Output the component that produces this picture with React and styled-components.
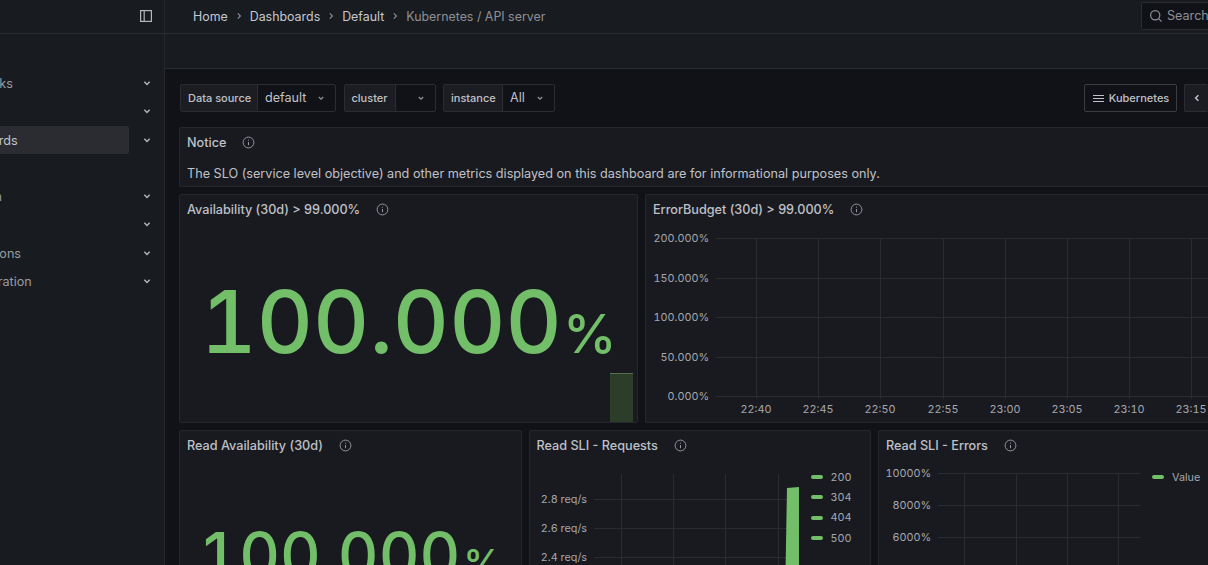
import React from 'react'
import styled, { createGlobalStyle } from 'styled-components'

const GlobalStyle = createGlobalStyle`
  html, body {
    margin: 0;
    height: 100%;
    overflow: hidden;
    background: #111217;
  }
  body {
    font-family: Inter, "Noto Sans", "Liberation Sans", sans-serif;
    color: #ccccdc;
  }
`

const Page = styled.div`
  display: flex;
  width: 1208px;
  height: 565px;
  overflow: hidden;
`

const Sidebar = styled.aside`
  flex: 0 0 164px;
  background: #181b1f;
  border-right: 1px solid #26282d;
  overflow: hidden;
`

const SidebarHead = styled.div`
  display: flex;
  align-items: center;
  justify-content: flex-end;
  height: 34px;
  padding: 0 11px 1px 0;
  border-bottom: 1px solid #2a2c31;
  box-sizing: border-box;
  color: #b4b5bb;
`

const Nav = styled.nav`
  padding-top: 35px;
`

const NavRow = styled.div`
  display: flex;
  align-items: center;
  height: 28.25px;
  color: #9a9ba2;
`

const NavLabel = styled.div`
  flex: 0 0 129px;
  height: 28px;
  line-height: 29px;
  font-size: 12.6px;
  white-space: nowrap;
  overflow: hidden;
  border-radius: 0 2px 2px 0;
  background: ${p => (p.$active ? '#2a2c31' : 'transparent')};
  color: ${p => (p.$active ? '#c4c5cc' : '#9a9ba2')};
`

const NavText = styled.span`
  display: inline-block;
  margin-left: -54px;
`

const NavCaret = styled.div`
  flex: 0 0 35px;
  display: flex;
  justify-content: center;
  color: #b4b5bb;
`

const Content = styled.main`
  flex: 1;
  min-width: 0;
  overflow: hidden;
`

const TopBar = styled.header`
  display: flex;
  align-items: center;
  justify-content: space-between;
  height: 34px;
  padding: 0 0 1px 28px;
  box-sizing: border-box;
  background: #181b1f;
  border-bottom: 1px solid #2a2c31;
`

const Crumbs = styled.div`
  display: flex;
  align-items: center;
  gap: 6px;
  font-size: 12.4px;
`

const Crumb = styled.span`
  color: ${p => (p.$current ? '#8f9097' : '#c6c7d2')};
`

const CrumbSep = styled.span`
  display: flex;
  color: #8f9097;
`

const SearchBox = styled.div`
  flex: 0 0 auto;
  display: flex;
  align-items: center;
  gap: 4px;
  width: 67px;
  height: 28px;
  margin-top: -1px;
  padding-left: 7px;
  box-sizing: border-box;
  overflow: hidden;
  background: #111217;
  border: 1px solid #2a2c31;
  border-right: 0;
  border-radius: 2px 0 0 2px;
  color: #8f9097;
  font-size: 12.6px;
`

const SubBar = styled.div`
  height: 35px;
  box-sizing: border-box;
  background: #181b1f;
  border-bottom: 1px solid #2a2c31;
`

const Dashboard = styled.div`
  padding: 15px 0 0 14px;
`

const FilterRow = styled.div`
  display: flex;
  align-items: center;
  justify-content: space-between;
  width: 1028px;
  height: 28px;
  margin: 0 0 15px 1px;
`

const FilterGroup = styled.div`
  display: flex;
  gap: 7.5px;
`

const Filter = styled.div`
  display: flex;
  height: 28px;
  box-sizing: border-box;
  border: 1px solid #2b2d32;
  border-radius: 2px;
  background: #111217;
`

const FilterName = styled.div`
  display: flex;
  align-items: center;
  width: ${p => p.$w}px;
  padding: 0 0 1px 7px;
  box-sizing: border-box;
  background: #1b1d22;
  border-right: 1px solid #2b2d32;
  font-size: 11px;
  font-weight: 500;
  color: #c0c1c8;
`

const FilterValue = styled.div`
  display: flex;
  align-items: center;
  justify-content: space-between;
  width: ${p => p.$w}px;
  padding: 0 9px 1px 7px;
  box-sizing: border-box;
  font-size: 12.6px;
  color: #c0c1c8;
  svg {
    color: #94959c;
  }
`

const RightButtons = styled.div`
  display: flex;
  gap: 7px;
`

const LinkButton = styled.div`
  display: flex;
  align-items: center;
  justify-content: ${p => (p.$icon ? 'flex-start' : 'center')};
  gap: 4px;
  width: ${p => p.$w}px;
  height: 28px;
  padding-left: ${p => (p.$icon ? '8px' : '0')};
  box-sizing: border-box;
  border: 1px solid ${p => (p.$icon ? '#2b2d32' : '#3a3c42')};
  border-right-width: ${p => (p.$icon ? '0' : '1px')};
  border-radius: 2px;
  background: ${p => (p.$icon ? '#1b1d22' : '#111217')};
  font-size: 11px;
  font-weight: 500;
  color: #c0c1c8;
`

const Grid = styled.div`
  display: grid;
  grid-template-columns: repeat(12, 109.5px);
  grid-auto-rows: min-content;
  gap: 7px;
`

const Panel = styled.section`
  grid-column: span ${p => p.$span};
  position: relative;
  height: ${p => p.$h}px;
  display: flex;
  flex-direction: column;
  box-sizing: border-box;
  background: #181a1f;
  border: 1px solid #25272c;
  border-radius: 2px;
  overflow: hidden;
`

const PanelHead = styled.div`
  flex: 0 0 29px;
  display: flex;
  align-items: center;
  gap: 16px;
  padding-left: 7px;
  font-size: 12.65px;
  font-weight: 500;
  color: #bfc0c8;
`

const InfoMark = styled.span`
  display: flex;
  color: #94959c;
`

const NoticeText = styled.div`
  padding: 8px 7px 0;
  font-size: 12.65px;
  line-height: 18px;
  color: #c0c1c8;
`

const StatBody = styled.div`
  flex: 1;
  display: flex;
  align-items: center;
  justify-content: center;
  padding-bottom: ${p => p.$pad}px;
  color: #73bf69;
  font-weight: 500;
  white-space: nowrap;
`

const StatLine = styled.div`
  display: flex;
  align-items: baseline;
  font-variant-numeric: tabular-nums;
`

const StatValue = styled.span`
  font-size: ${p => p.$size}px;
  line-height: 1;
`

const StatUnit = styled.span`
  font-size: ${p => p.$size}px;
  line-height: 1;
  margin-left: ${p => p.$gap}px;
`

const Spark = styled.div`
  position: absolute;
  right: 4px;
  bottom: 0;
  width: 23px;
  height: 49px;
  box-sizing: border-box;
  background: #2c3e2a;
  border-top: 1px solid #55704f;
`

const ChartRow = styled.div`
  flex: 1;
  display: flex;
  align-items: flex-start;
`

const ChartSvg = styled.svg`
  display: block;
  flex: 0 0 auto;
  text {
    font-family: Inter, "Noto Sans", "Liberation Sans", sans-serif;
    font-size: 10.8px;
    font-variant-numeric: tabular-nums;
    fill: #a6a7ae;
  }
`

const Legend = styled.ul`
  list-style: none;
  margin: 7px 0 0 7px;
  padding: 0;
`

const LegendItem = styled.li`
  display: flex;
  align-items: center;
  gap: 8px;
  height: 20.3px;
  font-size: 10.8px;
  font-variant-numeric: tabular-nums;
  color: #a6a7ae;
  &::before {
    content: '';
    width: 12px;
    height: 4px;
    border-radius: 2px;
    background: #73bf69;
  }
`

const Caret = ({ size = 10 }) => (
  <svg width={size} height={size} viewBox="0 0 10 10" fill="none" stroke="currentColor" strokeWidth="1.2">
    <path d="M2.8 4 5 6.2 7.2 4" />
  </svg>
)

const Info = () => (
  <InfoMark>
    <svg width="13" height="13" viewBox="0 0 13 13" fill="none" stroke="currentColor">
      <circle cx="6.5" cy="6.5" r="5.4" />
      <path d="M6.5 6v3.2M6.5 3.6v1" />
    </svg>
  </InfoMark>
)

const Sep = () => (
  <CrumbSep>
    <svg width="10" height="10" viewBox="0 0 10 10" fill="none" stroke="currentColor" strokeWidth="1.1">
      <path d="M3.8 2.4 6.4 5 3.8 7.6" />
    </svg>
  </CrumbSep>
)

const navItems = [
  { label: 'Bookmarks', caret: true },
  { label: 'Starred', caret: true },
  { label: 'Dashboards', caret: true, active: true },
  { label: 'Explore' },
  { label: 'Drilldown', caret: true },
  { label: 'Alerting', caret: true },
  { label: 'Connections', caret: true },
  { label: 'Administration', caret: true },
]

const LINE = '#2a2c31'

// coordinates are local to the svg
const Chart = ({ width, height, left, right, rows, cols, bottomLabels, top = 0, bottom, children }) => (
  <ChartSvg width={width} height={height}>
    {rows.map(r => (
      <g key={r.label}>
        <line x1={left + 7} x2={right} y1={r.y + 0.5} y2={r.y + 0.5} stroke={LINE} />
        <text x={left} y={r.y + 4} textAnchor="end">{r.label}</text>
      </g>
    ))}
    {cols.map(c => (
      <line key={c.x} x1={c.x + 0.5} x2={c.x + 0.5} y1={top} y2={bottom ?? height} stroke={LINE} />
    ))}
    {bottomLabels && cols.map(c => (
      <text key={c.label} x={c.x} y={bottomLabels} textAnchor="middle">{c.label}</text>
    ))}
    {children}
  </ChartSvg>
)

const budgetRows = [
  { label: '200.000%', y: 14 },
  { label: '150.000%', y: 54 },
  { label: '100.000%', y: 93 },
  { label: '50.000%', y: 133 },
  { label: '0.000%', y: 172 },
]

const budgetCols = ['22:40', '22:45', '22:50', '22:55', '23:00', '23:05', '23:10', '23:15'].map((label, i) => ({
  label,
  x: Math.round(110 + i * 62.2),
}))

const requestRows = [
  { label: '2.8 req/s', y: 39 },
  { label: '2.6 req/s', y: 68 },
  { label: '2.4 req/s', y: 97 },
]

const requestCols = [91, 143, 195, 248].map(x => ({ x }))

const errorRows = [
  { label: '10000%', y: 13 },
  { label: '8000%', y: 45 },
  { label: '6000%', y: 77 },
  { label: '4000%', y: 109 },
]

const errorCols = [85, 137, 188, 239].map(x => ({ x }))

export default function App() {
  return (
    <Page>
      <GlobalStyle />
      <Sidebar>
        <SidebarHead>
          <svg width="14" height="14" viewBox="0 0 14 14" fill="none" stroke="currentColor" strokeWidth="1.2">
            <rect x="1.6" y="1.6" width="10.8" height="10.8" />
            <path d="M5.2 1.6v10.8" />
          </svg>
        </SidebarHead>
        <Nav>
          {navItems.map(item => (
            <NavRow key={item.label}>
              <NavLabel $active={item.active}>
                <NavText>{item.label}</NavText>
              </NavLabel>
              {item.caret && <NavCaret><Caret size={12} /></NavCaret>}
            </NavRow>
          ))}
        </Nav>
      </Sidebar>
      <Content>
        <TopBar>
          <Crumbs>
            <Crumb>Home</Crumb>
            <Sep />
            <Crumb>Dashboards</Crumb>
            <Sep />
            <Crumb>Default</Crumb>
            <Sep />
            <Crumb $current>Kubernetes / API server</Crumb>
          </Crumbs>
          <SearchBox>
            <svg width="14" height="14" viewBox="0 0 14 14" fill="none" stroke="currentColor" strokeWidth="1.2" style={{ flexShrink: 0 }}>
              <circle cx="6.2" cy="6.2" r="4.6" />
              <path d="m9.6 9.6 3 3" />
            </svg>
            Search
          </SearchBox>
        </TopBar>
        <SubBar />
        <Dashboard>
          <FilterRow>
            <FilterGroup>
              <Filter>
                <FilterName $w={77}>Data source</FilterName>
                <FilterValue $w={77}>default <Caret /></FilterValue>
              </Filter>
              <Filter>
                <FilterName $w={51}>cluster</FilterName>
                <FilterValue $w={39}><span /><Caret /></FilterValue>
              </Filter>
              <Filter>
                <FilterName $w={59}>instance</FilterName>
                <FilterValue $w={51}>All <Caret /></FilterValue>
              </Filter>
            </FilterGroup>
            <RightButtons>
              <LinkButton $w={93}>
                <svg width="13" height="13" viewBox="0 0 13 13" fill="none" stroke="currentColor" strokeWidth="1.2">
                  <path d="M1 3.5h11M1 6.5h11M1 9.5h11" />
                </svg>
                Kubernetes
              </LinkButton>
              <LinkButton $w={24} $icon>
                <svg width="8" height="10" viewBox="0 0 8 10" fill="none" stroke="currentColor" strokeWidth="1.5">
                  <path d="M5.4 2.2 2.6 5l2.8 2.8" />
                </svg>
              </LinkButton>
            </RightButtons>
          </FilterRow>
          <Grid>
            <Panel $span={12} $h={60}>
              <PanelHead>Notice <Info /></PanelHead>
              <NoticeText>
                The SLO (service level objective) and other metrics displayed on this dashboard are for informational purposes only.
              </NoticeText>
            </Panel>
            <Panel $span={4} $h={229}>
              <PanelHead>Availability (30d) &gt; 99.000% <Info /></PanelHead>
              <StatBody $pad={4}>
                <StatLine>
                  <StatValue $size={87}>100.000</StatValue>
                  <StatUnit $size={54} $gap={1}>%</StatUnit>
                </StatLine>
              </StatBody>
              <Spark />
            </Panel>
            <Panel $span={8} $h={229}>
              <PanelHead>ErrorBudget (30d) &gt; 99.000% <Info /></PanelHead>
              <Chart width={923} height={198} left={63} right={923} rows={budgetRows} cols={budgetCols} bottomLabels={189} top={14} bottom={175} />
            </Panel>
            <Panel $span={3} $h={229}>
              <PanelHead>Read Availability (30d) <Info /></PanelHead>
              <StatBody $pad={8}>
                <StatLine>
                  <StatValue $size={63}>100.000</StatValue>
                  <StatUnit $size={39} $gap={3}>%</StatUnit>
                </StatLine>
              </StatBody>
            </Panel>
            <Panel $span={3} $h={229}>
              <PanelHead>Read SLI - Requests <Info /></PanelHead>
              <ChartRow>
                <Chart width={274} height={198} left={57} right={268} rows={requestRows} cols={requestCols} top={14}>
                  <path d="M257 28 269 27 269 198 254 198Z" fill="#73bf69" />
                </Chart>
                <Legend>
                  <LegendItem>200</LegendItem>
                  <LegendItem>304</LegendItem>
                  <LegendItem>404</LegendItem>
                  <LegendItem>500</LegendItem>
                </Legend>
              </ChartRow>
            </Panel>
            <Panel $span={3} $h={229}>
              <PanelHead>Read SLI - Errors <Info /></PanelHead>
              <ChartRow>
                <Chart width={266} height={198} left={52} right={261} rows={errorRows} cols={errorCols} top={13} />
                <Legend>
                  <LegendItem>Value</LegendItem>
                </Legend>
              </ChartRow>
            </Panel>
          </Grid>
        </Dashboard>
      </Content>
    </Page>
  )
}
